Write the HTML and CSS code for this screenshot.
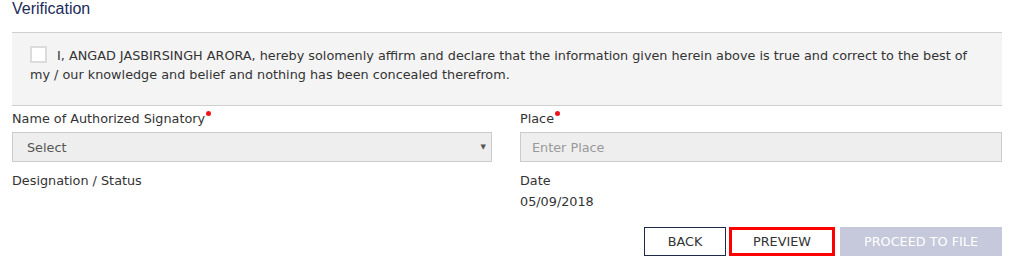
FILE: index.html
```html
<!DOCTYPE html>
<html>
<head>
<meta charset="utf-8">
<link rel="stylesheet" href="styles.css">
</head>
<body>
<div class="page">
  <h2 class="title">Verification</h2>
  <div class="declare">
    <p class="declare-text"><span class="check"></span>I, ANGAD JASBIRSINGH ARORA, hereby solomenly affirm and declare that the information given herein above is true and correct to the best of my / our knowledge and belief and nothing has been concealed therefrom.</p>
  </div>
  <div class="fields">
    <div class="field">
      <label class="label">Name of Authorized Signatory<span class="req"></span></label>
      <div class="select"><span>Select</span><span class="arrow">&#9660;</span></div>
    </div>
    <div class="field">
      <label class="label">Place<span class="req"></span></label>
      <div class="input"><span>Enter Place</span></div>
    </div>
    <div class="field">
      <label class="label">Designation / Status</label>
    </div>
    <div class="field">
      <label class="label">Date</label>
      <div class="value">05/09/2018</div>
    </div>
  </div>
  <div class="actions">
    <button class="btn btn-back">BACK</button>
    <button class="btn btn-preview">PREVIEW</button>
    <button class="btn btn-proceed">PROCEED TO FILE</button>
  </div>
</div>
</body>
</html>
```
FILE: styles.css
```css
* { box-sizing: border-box; }
html, body { margin: 0; padding: 0; background: #fff; }
body { font-family: "DejaVu Sans", Verdana, sans-serif; font-size: 12.8px; color: #333; }
.page { padding: 0 10px 0 12px; width: 1012px; }
.title {
  margin: 0;
  font-family: "Liberation Sans", Arial, sans-serif;
  font-weight: normal;
  font-size: 16px;
  line-height: 18px;
  color: #1c2b5a;
}
.declare {
  margin-top: 14px;
  background: #f4f4f4;
  border-top: 1px solid #cfcfcf;
  border-bottom: 1px solid #cfcfcf;
  padding: 13px 18px 20px 18px;
  height: 74px;
}
.declare-text { margin: 0; line-height: 19px; }
.check {
  display: inline-block;
  width: 17px;
  height: 17px;
  background: #fff;
  border: 2px solid #dcdcdc;
  vertical-align: -3px;
  margin-right: 10px;
}
.fields {
  display: grid;
  grid-template-columns: 480px 482px;
  column-gap: 28px;
  margin-top: 3px;
}
.label { display: block; line-height: 20px; }
.req {
  display: inline-block;
  width: 5px; height: 5px;
  border-radius: 50%;
  background: #f0121b;
  vertical-align: 7px;
  margin-left: 1px;
}
.select, .input {
  margin-top: 3px;
  height: 30px;
  background: #eee;
  border: 1px solid #ccc;
  display: flex;
  align-items: center;
  justify-content: space-between;
}
.select { padding: 0 5px 0 14px; color: #555; }
.arrow { font-size: 7px; color: #555; }
.input { padding: 0 11px; color: #999; }
.field:nth-child(3), .field:nth-child(4) { margin-top: 9px; }
.value { margin-top: 1px; line-height: 20px; }
.actions {
  display: flex;
  justify-content: flex-end;
  margin-top: 15px;
}
.btn {
  font-family: "DejaVu Sans", Verdana, sans-serif;
  font-size: 12.8px;
  height: 29px;
  padding: 0;
  background: #fff;
  color: #333;
  cursor: pointer;
}
.btn-back { width: 82px; border: 1px solid #1a2a47; }
.btn-preview { width: 106px; border: 3px solid #f00; margin-left: 3px; }
.btn-proceed { width: 162px; border: 0; background: #c5c9db; color: #fff; margin-left: 5px; }
```
